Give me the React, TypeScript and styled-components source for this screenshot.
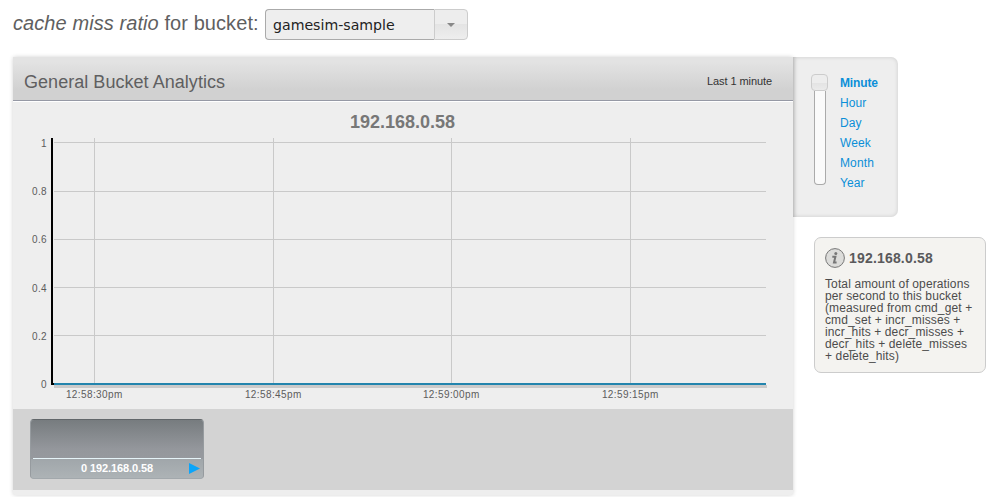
import React from "react";
import styled, { createGlobalStyle } from "styled-components";

const GlobalStyle = createGlobalStyle`
  * { box-sizing: border-box; }
  body { margin: 0; background: #fff; overflow: hidden; font-family: "Liberation Sans", Arial, sans-serif; color: #555; }
`;

const Page = styled.div`
  width: 992px;
  height: 497px;
  overflow: hidden;
`;
const TopBar = styled.header`
  display: flex;
  height: 57px;
  padding: 9px 0 0 13px;
`;
const Heading = styled.h1`
  width: 252px;
  margin: 0;
  font-size: 20px;
  line-height: 29px;
  font-weight: 400;
  letter-spacing: 0.08px;
  white-space: nowrap;
  color: #5f5f61;
`;
const Select = styled.button`
  display: flex;
  width: 203px;
  height: 31px;
  padding: 0;
  border: 0;
  background: none;
  color: #222;
  font: 14.15px "DejaVu Sans", sans-serif;
`;
const SelectValue = styled.span`
  flex: 1;
  height: 31px;
  padding-left: 7px;
  border: 1px solid #aaa;
  border-right: 0;
  border-radius: 4px 0 0 4px;
  background: #eee;
  line-height: 31px;
  text-align: left;
  white-space: nowrap;
`;
const SelectArrow = styled.span`
  display: flex;
  align-items: center;
  justify-content: center;
  width: 34px;
  height: 31px;
  border: 1px solid #ccc;
  border-radius: 0 4px 4px 0;
  background: linear-gradient(#ededed 50%, #e4e4e4 50%, #eee);
`;
const Body = styled.main`
  display: flex;
  align-items: flex-start;
  padding-left: 13px;
`;
const Panel = styled.section`
  position: relative;
  width: 780px;
  height: 438px;
  background: #eee;
  border-radius: 2px;
  box-shadow: 0 0 4px rgba(0, 0, 0, 0.18);
`;
const PanelHeader = styled.div`
  display: flex;
  align-items: center;
  justify-content: space-between;
  height: 45px;
  padding: 5px 21px 0 11px;
  border-bottom: 1px solid #fff;
  box-shadow: inset 0 -1px #9699a5;
  background: linear-gradient(#e3e3e3 10%, #d1d1d1 75%, #d1d1d1);
`;
const PanelTitle = styled.h2`
  margin: 0;
  font-size: 18px;
  font-weight: 400;
  line-height: 22px;
  letter-spacing: 0.04px;
  color: #5f5f61;
`;
const Period = styled.span`
  position: relative;
  top: -1px;
  font-size: 11px;
  line-height: 14px;
  letter-spacing: -0.08px;
  color: #333;
`;
const Chart = styled.svg`
  display: block;
  width: 780px;
  height: 307px;
  font-family: "Liberation Sans", Arial, sans-serif;
`;
const Thumbs = styled.div`
  height: 81px;
  padding: 10px 17px;
  background: #d3d3d3;
`;
const Thumb = styled.div`
  display: flex;
  flex-direction: column;
  width: 174px;
  height: 60px;
  border-radius: 4px;
  overflow: hidden;
  border: 1px solid #969b9f;
  border-top-color: #62676a;
  border-bottom-color: #a2a8ac;
  background: #a6acb0;
`;
const ThumbPlot = styled.div`
  height: 39px;
  padding: 38px 2px 0;
  background: linear-gradient(#777c7f, #94979c 75%, #96999e);
  &::after { content: ""; display: block; height: 1px; background: #e5f3f8; }
`;
const ThumbLabel = styled.div`
  display: flex;
  align-items: center;
  justify-content: flex-end;
  height: 19px;
  padding: 0 3px 1px 0;
  background: linear-gradient(#a0a6aa, #adb3b6);
  color: #fff;
  font-size: 11px;
  line-height: 12px;
  font-weight: 700;
  letter-spacing: -0.1px;
  gap: 36px;
`;
const Side = styled.div`
  width: 199px;
`;
const ZoomBox = styled.div`
  display: flex;
  width: 105px;
  height: 160px;
  padding: 16px 0 0 18px;
  border-radius: 0 7px 7px 0;
  background: #eee;
  box-shadow: inset 0 0 4px rgba(0, 0, 0, 0.14), inset 5px 0 5px -3px rgba(0, 0, 0, 0.08);
`;
const Slider = styled.div`
  display: flex;
  flex-direction: column;
  align-items: center;
  width: 17px;
`;
const Handle = styled.div`
  width: 17px;
  height: 17px;
  margin-top: 1px;
  border: 1px solid #ccc;
  border-radius: 4px;
  background: linear-gradient(#ededed 50%, #e3e3e3 50%, #ebebeb);
`;
const Track = styled.div`
  width: 12px;
  height: 94px;
  border: 1px solid #aaa;
  border-top: 0;
  border-radius: 0 0 4px 4px;
  background: #fafafa;
`;
const Periods = styled.ul`
  margin: 0 0 0 12px;
  padding: 0;
  list-style: none;
`;
const PeriodItem = styled.li<{ $active?: boolean }>`
  height: 20px;
  font-size: 12px;
  line-height: 20px;
  font-weight: ${(p) => (p.$active ? 700 : 400)};
  letter-spacing: ${(p) => (p.$active ? "-0.15px" : "0.12px")};
  color: #0b8fd8;
`;
const Info = styled.aside`
  width: 172px;
  height: 136px;
  margin: 20px 0 0 21px;
  padding: 10px 0 0 10px;
  border: 1px solid #ccc;
  border-radius: 7px;
  background: #f4f3f0;
`;
const InfoHead = styled.div`
  display: flex;
  align-items: center;
  gap: 4px;
  height: 20px;
  font-size: 14px;
  font-weight: 700;
  letter-spacing: 0.18px;
  color: #5a5a5c;
`;
const InfoText = styled.p`
  margin: 10px 0 0;
  font-size: 12px;
  line-height: 12px;
  letter-spacing: 0.12px;
  white-space: pre;
  color: #4c4c4c;
`;

const yTicks = [
  { label: "1", y: 142, base: 147 },
  { label: "0.8", y: 191, base: 195 },
  { label: "0.6", y: 239, base: 243 },
  { label: "0.4", y: 287, base: 292 },
  { label: "0.2", y: 335, base: 340 },
  { label: "0", y: 384, base: 388 },
];
const xTicks = [
  { label: "12:58:30pm", x: 94 },
  { label: "12:58:45pm", x: 273 },
  { label: "12:59:00pm", x: 451 },
  { label: "12:59:15pm", x: 630 },
];
const periods = ["Minute", "Hour", "Day", "Week", "Month", "Year"];
const description = [
  "Total amount of operations",
  "per second to this bucket",
  "(measured from cmd_get +",
  "cmd_set + incr_misses +",
  "incr_hits + decr_misses +",
  "decr_hits + delete_misses",
  "+ delete_hits)",
].join("\n");

function RatioChart() {
  return (
    <Chart viewBox="13 102 780 307">
      <text x="402.5" y="128" textAnchor="middle" fontSize="18" fontWeight="700" fill="#777">192.168.0.58</text>
      <g fill="#c9c9c9">
        {yTicks.slice(0, 5).map((t) => <rect key={t.label} x="54" y={t.y} width="712" height="1" />)}
        {xTicks.map((t) => <rect key={t.label} x={t.x} y="138" width="1" height="246" />)}
      </g>
      <rect x="54" y="385" width="713" height="3" fill="#cacaca" />
      <path d="M52 138V384H54" fill="none" stroke="#000" strokeWidth="2" />
      <rect x="54" y="383" width="712" height="2" fill="#2384ad" />
      <g fill="#5c5c5c" fontSize="10">
        {yTicks.map((t) => (
          <text key={t.label} x="47" y={t.base} textAnchor="end" letterSpacing="0.35">{t.label}</text>
        ))}
        {xTicks.map((t) => (
          <text key={t.label} x={t.x + 0.3} y="398" textAnchor="middle" letterSpacing="0.4">{t.label}</text>
        ))}
      </g>
    </Chart>
  );
}

export default function App() {
  return (
    <Page>
      <GlobalStyle />
      <TopBar>
        <Heading><em>cache miss ratio</em> for bucket:</Heading>
        <Select>
          <SelectValue>gamesim-sample</SelectValue>
          <SelectArrow>
            <svg width="8" height="4"><path d="M0 0H8L4 4Z" fill="#888" /></svg>
          </SelectArrow>
        </Select>
      </TopBar>
      <Body>
        <Panel>
          <PanelHeader>
            <PanelTitle>General Bucket Analytics</PanelTitle>
            <Period>Last 1 minute</Period>
          </PanelHeader>
          <RatioChart />
          <Thumbs>
            <Thumb>
              <ThumbPlot />
              <ThumbLabel>
                <span>0 192.168.0.58</span>
                <svg width="11" height="11"><path d="M0 0L11 5.5L0 11Z" fill="#0ba5fa" /></svg>
              </ThumbLabel>
            </Thumb>
          </Thumbs>
        </Panel>
        <Side>
          <ZoomBox>
            <Slider><Handle /><Track /></Slider>
            <Periods>
              {periods.map((p, i) => <PeriodItem key={p} $active={i === 0}>{p}</PeriodItem>)}
            </Periods>
          </ZoomBox>
          <Info>
            <InfoHead>
              <svg width="20" height="20" viewBox="0 0 20 20">
                <circle cx="10" cy="10" r="9.4" fill="#dcdcda" stroke="#777" strokeWidth="1" />
                <circle cx="10.8" cy="5.5" r="1.5" fill="#777" />
                <path d="M7.3 8.7H10.4L9 14.4H11.6" fill="none" stroke="#777" strokeWidth="2" />
              </svg>
              <span>192.168.0.58</span>
            </InfoHead>
            <InfoText>{description}</InfoText>
          </Info>
        </Side>
      </Body>
    </Page>
  );
}
